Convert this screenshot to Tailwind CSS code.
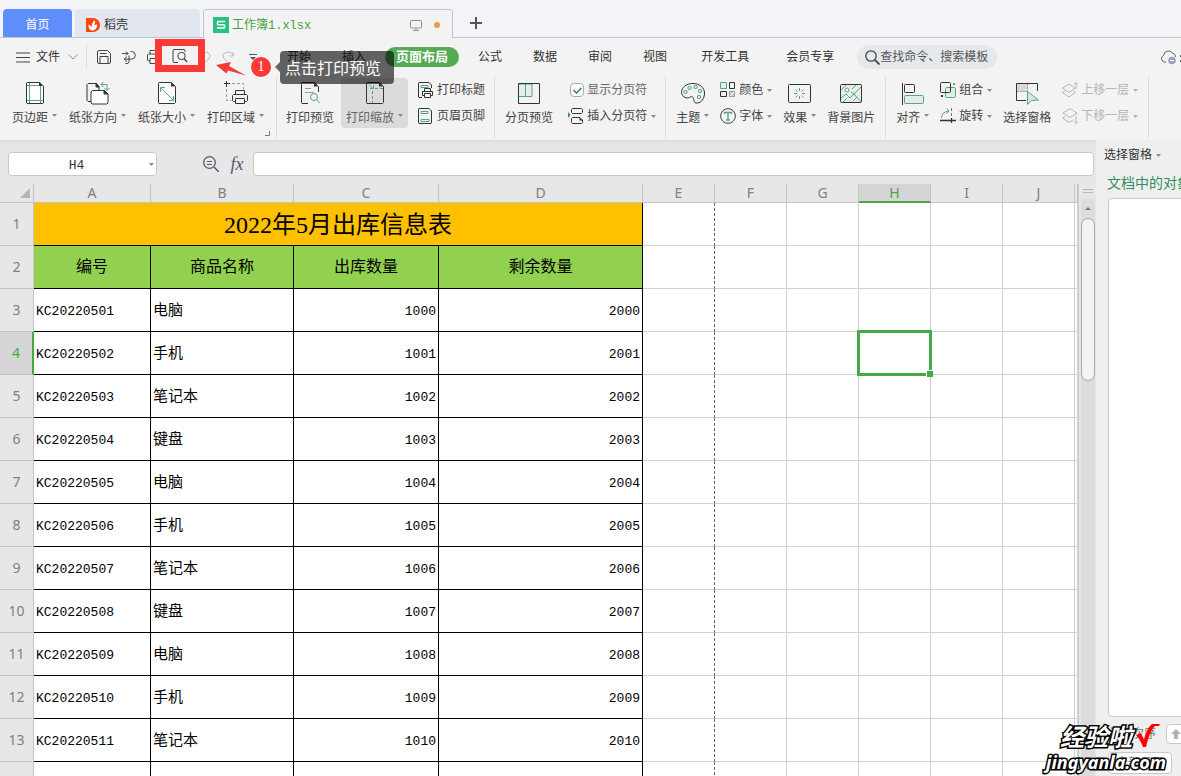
<!DOCTYPE html>
<html lang="zh-CN">
<head>
<meta charset="utf-8">
<meta name="viewport" content="width=device-width, initial-scale=1">
<title>工作簿1.xlsx</title>
<script src="https://cdn.jsdelivr.net/npm/@tailwindcss/browser@4"></script>
</head>
<body class="relative flex h-screen flex-col overflow-hidden bg-[#e7e7e7] font-['Liberation_Sans','Noto_Sans_CJK_SC',sans-serif] text-xs text-[#333] whitespace-nowrap">

<svg class="hidden">
  <symbol id="caret" viewBox="0 0 5 3"><path d="M0 0h5L2.5 3z" fill="#8a8a8a"/></symbol>
</svg>

<!-- Document tabs -->
<header class="relative flex h-[38px] shrink-0 items-end border-b border-[#c0c5d3] bg-[#f2f4f8]">
  <button class="ml-[3px] h-7 w-[69px] rounded-t-sm bg-[#5f8dfb] pt-1 text-white">首页</button>
  <button class="ml-[3px] flex h-7 w-[125px] items-center gap-1 rounded-t-sm bg-[#e2e6ef] pt-1 pl-[11px]">
    <svg class="size-[14px]" viewBox="0 0 14 14"><path d="M0 0h7a7 7 0 0 1 0 14H0z" fill="#fb4612"/><path d="M6.500 12.500C2.500 12 2.500 8.500 2.500 6.500c1.500.5 2.500 1.500 3.200 3C5.500 6.500 6.500 4 9 2c.4 2 0 4-1.400 6 .9-.9 2-1.400 3.600-1.400 0 3.200-1.400 5.500-4.700 5.900z" fill="#fff"/></svg>
    <span>稻壳</span>
  </button>
  <div class="-mb-px ml-[3px] flex h-[29px] w-[250px] items-center rounded-t border border-b-0 border-[#c0c5d3] bg-[#f3f3f3] pt-0.5 pr-3 pl-[9px]">
    <svg class="size-4 shrink-0" viewBox="0 0 16 16"><path d="M0 0h16v16H0z" fill="#27c280"/><path d="M12 4.500H5l-.5.500v2.200l.5.500h6l.5.500v2.300l-.5.500H4" fill="none" stroke="#fff" stroke-width="1.500"/></svg>
    <span class="ml-[3px] text-[#3fa43f]">工作簿<span class="font-['Liberation_Mono',monospace]">1.xlsx</span></span>
    <svg class="ml-auto h-[11px] w-3" viewBox="0 0 12 11" fill="none" stroke="#8d8d8d"><rect x=".5" y=".5" width="11" height="7.500" rx="1"/><path d="M6 8v2.500M3 10.500h6"/></svg>
    <span class="ml-3 size-1.5 rounded-full bg-[#e79c53]"></span>
  </div>
  <button class="ml-[17px] flex h-7 items-center" aria-label="新建标签"><svg class="size-3" viewBox="0 0 12 12"><path d="M6 0v12M0 6h12" stroke="#555" stroke-width="2"/></svg></button>
</header>

<!-- Menu -->
<div class="flex h-[38px] shrink-0 items-center bg-[#f3f3f3]">
  <button class="ml-4 flex items-center">
    <svg class="h-[11px] w-[14px]" viewBox="0 0 14 11"><path d="M0 1h14M0 5.500h14M0 10h14" stroke="#444"/></svg>
    <span class="ml-1.5">文件</span>
    <svg class="ml-2 h-[6px] w-[10px]" viewBox="0 0 10 6"><path d="M.5.5 5 5 9.500.5" fill="none" stroke="#888"/></svg>
  </button>
  <span class="ml-2 h-6 w-px bg-[#ddd]"></span>
  <div class="ml-2.5 flex w-[180px] items-center gap-[11px] text-[#444]">
    <button aria-label="保存" class="size-[14px]"><svg viewBox="0 0 14 14" fill="none" stroke="currentColor"><path d="M2 .5h8.500l3 3V12q0 1.500-1.500 1.500H2Q.5 13.500.5 12V2Q.5.5 2 .5zM3 3.500h6.500M3 13V6.500h8V13"/></svg></button>
    <button aria-label="输出" class="size-[14px]"><svg viewBox="0 0 14 14" fill="none" stroke="currentColor"><path d="M0 3.500h6M4 1.500l2 2-2 2M8.500 1.500h1a3.800 3.800 0 0 1 0 7.600H2M5 6.500 2.300 9.100 5 11.700M7 5.500v6a2 2 0 0 1-2 2H3.500"/></svg></button>
    <button aria-label="打印" class="size-[14px]"><svg viewBox="0 0 14 14" fill="none" stroke="currentColor"><path d="M3 4V.5h8V4M3 11H1.500L.5 10V5l1-1h11l1 1v5l-1 1H11M3 8.500h8v5H3z"/></svg></button>
    <button aria-label="打印预览" class="size-4"><svg viewBox="0 0 16 16" fill="none" stroke="currentColor"><path d="M6 13.500H2Q1 13.500 1 12.500v-11Q1 .5 2 .5h10q1 0 1 1V3"/><circle cx="9.500" cy="7" r="3.700"/><path d="m12 9.500 3 3.500" stroke-width="1.500"/></svg></button>
    <button aria-label="撤销" class="size-3 text-[#bbb]"><svg viewBox="0 0 12 12" fill="none" stroke="currentColor"><path d="M1 1v4h4M1 5a5 4 0 0 1 10 0q0 3-5 6"/></svg></button>
    <button aria-label="恢复" class="size-3 text-[#bbb]"><svg viewBox="0 0 12 12" fill="none" stroke="currentColor"><path d="M11 1v4H7M11 5A5 4 0 0 0 1 5q0 3 5 6"/></svg></button>
    <button aria-label="更多" class="ml-1 h-[6px] w-2"><svg viewBox="0 0 8 6"><path d="M0 0h8v1H0zM1 3h6L4 6z" fill="#555"/></svg></button>
  </div>
  <nav class="ml-2.5 flex shrink-0 items-center gap-[31px]">
    <a href="#">开始</a><a href="#">插入</a>
    <a href="#" class="-mx-3 flex h-5 items-center rounded-full bg-[#55ab54] px-[11px] text-[13px] font-bold text-white">页面布局</a>
    <a href="#">公式</a><a href="#">数据</a><a href="#">审阅</a><a href="#">视图</a>
    <a href="#" class="ml-[3px]">开发工具</a><a href="#" class="ml-1.5">会员专享</a>
  </nav>
  <label class="ml-[23px] flex h-6 w-[140px] shrink-0 items-center rounded-full bg-[#e6e9ec] pl-2">
    <svg class="size-[15px] shrink-0" viewBox="0 0 15 15" fill="none" stroke="#444" stroke-width="1.300"><circle cx="6" cy="6" r="5.200"/><path d="m10 10 4.500 4.500" stroke-width="1.800"/></svg>
    <input class="w-[116px] text-[#555] outline-none placeholder:text-[#555] placeholder:opacity-100" placeholder="查找命令、搜索模板" aria-label="查找命令">
  </label>
  <svg class="ml-auto h-[15px] w-[21px] shrink-0" viewBox="0 0 21 15"><path d="M6 12H4a3.500 3.500 0 0 1-.5-6.500A5 5 0 0 1 12.500 3q3 .5 3 4" fill="none" stroke="#666"/><circle cx="12" cy="10.500" r="3.800" fill="#98a4b8"/><path d="M10 10.500h4" stroke="#fff"/><path d="M20 5h1v2h-1zM20 10h1v2h-1z" fill="#666"/></svg>
</div>

<!-- Ribbon -->
<section class="flex h-16 shrink-0 bg-[#f3f3f3] text-[#444] [&_button]:shrink-0 [&_button>span>svg]:mb-1.5 [&>div]:relative [&>div]:flex [&>div]:h-[62px] [&>div]:shrink-0 [&>div]:items-start [&>div]:border-r [&>div]:border-[#ddd] [&>div]:pt-0.5">
  <div class="gap-3 px-3">
    <button class="flex h-[50px] flex-col items-center justify-between pt-[3px]">
      <svg class="h-6 w-5" viewBox="0 0 20 24" fill="none"><path d="M2.500 1.500h12L18.500 5v17l-1 .5H2L1.500 22V2z" fill="#fff" stroke="#333"/><path d="M4.500 2v20M15.500 4v18M2 4.500h16M2 19.500h16" stroke="#5aa57c"/><path d="M14 1v4h4z" fill="#333"/></svg>
      <span class="flex items-center gap-1 leading-5">页边距<svg class="h-[3px] w-[5px]"><use href="#caret"/></svg></span>
    </button>
    <button class="flex h-[50px] flex-col items-center justify-between pt-[3px]">
      <svg class="h-6 w-6" viewBox="0 0 24 24" fill="none" stroke="#333"><path d="M5 20.500H2l-1-1v-16l1-1h8l3 3v4"/><path d="M6.500 9.500h12l3.500 3.500v9l-1 1H6l-1-1V11z" fill="#fff"/><path d="M10 2v4h3zM18 9.500V13h4z" fill="#333"/><path d="M15 3.500h6v5.500M17.500 1 15 3.500 17.500 6M18.500 7l2.500 2.500L23.500 7" stroke="#5aa57c"/></svg>
      <span class="flex items-center gap-1 leading-5">纸张方向<svg class="h-[3px] w-[5px]"><use href="#caret"/></svg></span>
    </button>
    <button class="flex h-[50px] flex-col items-center justify-between pt-[3px]">
      <svg class="h-6 w-5" viewBox="0 0 20 24" fill="none"><path d="M2 1.500h12.500l4 4V21.500l-1 1H2l-.5-1v-19z" fill="#fafafa" stroke="#333"/><path d="M14 1.500v4h4z" fill="#333"/><path d="m4 7 12 12M3.500 11V6.500H8M16.500 15v4.500H12" stroke="#5aa57c"/></svg>
      <span class="flex items-center gap-1 leading-5">纸张大小<svg class="h-[3px] w-[5px]"><use href="#caret"/></svg></span>
    </button>
    <button class="flex h-[50px] flex-col items-center justify-between pt-[3px]">
      <svg class="h-6 w-6" viewBox="0 0 24 24" fill="none" stroke="#333"><path d="M2.500 0v6M0 2.500h6"/><path d="M8 2.500h11.500v6M2.500 8v11.500h5" stroke="#999" stroke-dasharray="3 2"/><path d="M11.500 13.500v-4h9v4M11.500 20.500h-2l-1-1v-5l1-1h13l1 1v5l-1 1h-2M11.500 17.500h9v5h-9z"/></svg>
      <span class="flex items-center gap-1 leading-5">打印区域<svg class="h-[3px] w-[5px]"><use href="#caret"/></svg></span>
    </button>
    <svg class="absolute right-1.5 bottom-0.5 size-[5px]" viewBox="0 0 5 5"><path d="M4.500 0v4.500H0" fill="none" stroke="#777"/></svg>
  </div>

  <div class="gap-[7px] px-[9px]">
    <button class="flex h-[50px] flex-col items-center justify-between pt-[3px]">
      <svg class="h-6 w-5" viewBox="0 0 20 24" fill="none"><path d="M8 22.500H2l-.5-1v-19l.5-1h12.500l4 4V11" stroke="#333"/><path d="M14 1.500v4h4z" fill="#333"/><path d="M5 7.500h6M5 11.500h9" stroke="#999"/><circle cx="14" cy="16" r="3.500" stroke="#5aa57c"/><path d="m16.500 18.500 3.500 4" stroke="#5aa57c"/></svg>
      <span class="leading-5">打印预览</span>
    </button>
    <button class="flex h-[50px] flex-col items-center justify-between rounded bg-[#dbdbdb] px-[5px] pt-[3px] text-[#666]">
      <svg class="h-6 w-5" viewBox="0 0 20 24" fill="none"><path d="M2 1.500h12.500l4 4V21.500l-1 1H2l-.5-1v-19z" stroke="#333"/><path d="M14 1.500v4h4z" fill="#333"/><path d="m4 3.500 4 4M8.500 4v3.500H5" stroke="#5aa57c"/><path d="M10 7.500h8M7.500 10v12" stroke="#5aa57c" stroke-dasharray="3 2"/></svg>
      <span class="flex items-center gap-1 leading-5">打印缩放<svg class="h-[3px] w-[5px]"><use href="#caret"/></svg></span>
    </button>
    <span class="ml-0.5 flex flex-col gap-1.5 pt-0.5">
      <button class="flex h-5 items-center gap-1"><svg class="size-4" viewBox="0 0 16 16" fill="none" stroke="#333"><path d="M5 15.500H2L1.500 15V1L2 .5h10L14.500 3v3"/><path d="M4 3.500h7v2H4z" stroke="#5aa57c"/><path d="M7.500 9V6.500h6V9M7.500 13.500h-2v-4h10v4h-2M7.500 11.500h6v4h-6z"/></svg>打印标题</button>
      <button class="flex h-5 items-center gap-1"><svg class="size-4" viewBox="0 0 16 16" fill="none" stroke="#333"><path d="M2 .5h10L14.500 3v12l-.5.5H2l-.5-.5V1z"/><path d="M4 3.500h7v2H4zM4 11.500h8v2H4z" stroke="#5aa57c"/></svg>页眉页脚</button>
    </span>
  </div>

  <div class="gap-[15px] pr-[9px] pl-2.5">
    <button class="flex h-[50px] flex-col items-center justify-between pt-[3px]">
      <svg class="size-6" viewBox="0 0 24 24" fill="none"><path d="M2 3h13v12.500H2M8.500 3v12.500" fill="#e3efe8" stroke="#5aa57c"/><path d="M1.500 2.500h21v20h-21z" stroke="#333"/></svg>
      <span class="leading-5">分页预览</span>
    </button>
    <span class="flex flex-col gap-1.5 pt-0.5">
      <label class="relative flex h-5 items-center gap-[3px] pl-0.5 text-[#666]"><input type="checkbox" checked class="size-3.5 appearance-none rounded-sm border border-[#aaa] bg-white"><svg class="pointer-events-none absolute left-[5px] h-[7px] w-[9px]" viewBox="0 0 9 7"><path d="m.5 3 3 3L8.500.8" fill="none" stroke="#3d8c62" stroke-width="1.600"/></svg>显示分页符</label>
      <button class="flex h-5 items-center gap-[3px]"><svg class="size-4" viewBox="0 0 16 16" fill="none" stroke="#333"><path d="M3.500 2v2.500l1 1h9l1-1V1.500l-1-1h-9l-1 1v1M3.500 13.500v-3l1-1H12l2.500 2.500v2.500l-1 1h-9l-1-1z"/><path d="M11.500 9.500v3h3z" fill="#333" stroke="none"/><path d="M0 4v6l2.500-3z" fill="#3d8c62" stroke="none"/></svg>插入分页符<svg class="ml-px h-[3px] w-[5px]"><use href="#caret"/></svg></button>
    </span>
  </div>

  <div class="gap-[11px] px-2.5">
    <button class="flex h-[50px] flex-col items-center justify-between pt-[3px]">
      <svg class="h-6 w-[26px]" viewBox="0 0 26 24" fill="none"><path d="M13 2.500c6.500 0 11.500 4 11.500 9.500s-3 10-7.500 10c-4 0-2.500-3.500-4-5.500s-3.500.5-6 .5S1.500 14.500 1.500 11.500c0-5.500 5-9 11.500-9z" stroke="#333"/><g fill="#d5ebde" stroke="#5aa57c"><circle cx="5.500" cy="11" r="1.700"/><circle cx="9.500" cy="7" r="1.700"/><circle cx="15.500" cy="6" r="1.700"/><circle cx="20" cy="10" r="1.700"/><circle cx="19" cy="16" r="1.700"/></g></svg>
      <span class="flex items-center gap-1 leading-5">主题<svg class="h-[3px] w-[5px]"><use href="#caret"/></svg></span>
    </button>
    <span class="flex flex-col gap-1.5 pt-0.5">
      <button class="flex h-5 items-center gap-[3px]"><svg class="size-4" viewBox="0 0 16 16" fill="none"><path d="M.5.5h6v6h-6z" fill="#e3efe8" stroke="#5aa57c"/><path d="M9.500.5h5v6h-5zM.5 9.500h6v5h-6z" stroke="#333"/><path d="M9.500 9.500h5v5h-5zM9.500 13l4-4M11 15l4-4" stroke="#999"/></svg>颜色<svg class="ml-px h-[3px] w-[5px]"><use href="#caret"/></svg></button>
      <button class="flex h-5 items-center gap-[3px]"><svg class="size-4" viewBox="0 0 16 16" fill="none"><circle cx="8" cy="8" r="7.400" stroke="#444"/><path d="M4.500 6V4.500h7V6M8 4.500v7M6 12h4" stroke="#5aa57c" stroke-width="1.300"/></svg>字体<svg class="ml-px h-[3px] w-[5px]"><use href="#caret"/></svg></button>
    </span>
    <button class="flex h-[50px] flex-col items-center justify-between pt-[3px]">
      <svg class="size-6" viewBox="0 0 24 24" fill="none"><rect x=".5" y="3.500" width="22" height="18" rx="1" stroke="#333"/><path d="M11.500 7v3M11.500 15v3M6 12.500h3M14 12.500h3M7.500 8.500l2 2M13.500 14.500l2 2M15.500 8.500l-2 2M7.500 16.500l2-2" stroke="#5aa57c"/></svg>
      <span class="flex items-center gap-1 leading-5">效果<svg class="h-[3px] w-[5px]"><use href="#caret"/></svg></span>
    </button>
    <button class="flex h-[50px] flex-col items-center justify-between pt-[3px]">
      <svg class="size-6" viewBox="0 0 24 24" fill="none"><rect x="1.500" y="3.500" width="21" height="18" rx="1" fill="#e6f0ea"/><path d="m2 17 5-4 4 4 4-4 7 8M2 9l5-5M12 11l3 2 7-7M4 21l4-4M14 20l4-4M13 8l4-4" stroke="#5aa57c"/><circle cx="8" cy="9" r="2" fill="#fff" stroke="#5aa57c"/><rect x="1.500" y="3.500" width="21" height="18" rx="1" stroke="#333"/></svg>
      <span class="leading-5">背景图片</span>
    </button>
  </div>

  <div class="gap-[11px] px-2.5">
    <button class="flex h-[50px] flex-col items-center justify-between pt-[3px]">
      <svg class="size-6" viewBox="0 0 24 24" fill="none"><path d="M1.500 2v22" stroke="#333"/><rect x="3.500" y="3.500" width="10" height="8" rx="1" stroke="#333"/><rect x="3.500" y="14.500" width="19" height="8" rx="1" fill="#e0ede6" stroke="#5aa57c"/></svg>
      <span class="flex items-center gap-1 leading-5">对齐<svg class="h-[3px] w-[5px]"><use href="#caret"/></svg></span>
    </button>
    <span class="flex flex-col gap-1.5 pt-0.5">
      <button class="flex h-5 items-center gap-[3px]"><svg class="size-4" viewBox="0 0 16 16" fill="none"><rect x="5.500" y="5.500" width="10" height="10" rx="1" fill="#e0ede6" stroke="#5aa57c"/><rect x=".5" y=".5" width="10" height="10" rx="1" stroke="#333"/><path d="M13 1h2v2h-2z" fill="#5aa57c"/><path d="M1 13h2v2H1z" fill="#333"/></svg>组合<svg class="ml-px h-[3px] w-[5px]"><use href="#caret"/></svg></button>
      <button class="flex h-5 items-center gap-[3px]"><svg class="size-4" viewBox="0 0 16 16" fill="none"><path d="M1.500 10q0-6 7.500-7M6.500.5 9 3 6.500 5.500" stroke="#5aa57c"/><path d="M11.500 0v11" stroke="#777" stroke-dasharray="3 2"/><path d="M0 12.500h16M11.500 10v5" stroke="#333" stroke-width="1.300"/></svg>旋转<svg class="ml-px h-[3px] w-[5px]"><use href="#caret"/></svg></button>
    </span>
    <button class="flex h-[50px] flex-col items-center justify-between pt-[3px]">
      <svg class="size-6" viewBox="0 0 24 24" fill="none"><path d="M2 3h10v8H2z" fill="#d9d9dc"/><path d="M11 19.500H1.500v-17h21V10" stroke="#333"/><path d="M2 10.500h10M12.500 3v7" stroke="#999" stroke-dasharray="2 1"/><path d="M12.500 10.500v13l4-4 7-.5z" fill="#d7e9df" stroke="#5aa57c"/></svg>
      <span class="leading-5">选择窗格</span>
    </button>
    <span class="flex flex-col gap-1.5 pt-0.5 text-[#b5b5b5]">
      <button disabled class="flex h-5 items-center gap-[3px]"><svg class="size-4" viewBox="0 0 16 16" fill="none" stroke="currentColor"><path d="M7 2 .5 6 7 10.500l6-4.500zM.5 10.500 7 15l6.500-4.500L11 9M3 9l-2.500 1.500M14 7V.5M12 2.500 14 .5l2 2"/></svg>上移一层<svg class="ml-px h-[3px] w-[5px] opacity-60"><use href="#caret"/></svg></button>
      <button disabled class="flex h-5 items-center gap-[3px]"><svg class="size-4" viewBox="0 0 16 16" fill="none" stroke="currentColor"><path d="M8 .5 1 5l7 4.500L15 5zM3 8.500.5 10 7 14.500l4-2.500M14 8v7.500M12 13.500l2 2 2-2"/></svg>下移一层<svg class="ml-px h-[3px] w-[5px] opacity-60"><use href="#caret"/></svg></button>
    </span>
  </div>
</section>

<!-- Workspace -->
<div class="flex min-h-0 flex-1">
  <main class="flex min-w-0 flex-1 flex-col bg-linear-to-b from-[#dcdcdc] to-[#e7e7e7] to-[4px]">
    <div class="flex h-11 shrink-0 items-center pr-[2px] pb-2 pl-2 pt-3">
      <label class="relative flex h-6 w-[149px] shrink-0 items-center rounded border border-[#c9c9c9] bg-white">
        <input class="w-full pt-1 pr-3 text-center font-['Liberation_Mono',monospace] text-[13px] outline-none" value="H4" aria-label="名称框">
        <svg class="absolute right-0.5 h-[3px] w-[5px]"><use href="#caret"/></svg>
      </label>
      <button class="ml-[46px] size-4 shrink-0" aria-label="查找"><svg viewBox="0 0 16 16" fill="none" stroke="#505a70"><circle cx="6.500" cy="6.500" r="5.800" stroke-width="1.300"/><path d="M4 5.500h5M4 8.500h5"/><path d="m11 11 5 5" stroke-width="1.500"/></svg></button>
      <button class="ml-2.5 w-4 shrink-0 font-['Liberation_Serif',serif] text-lg leading-5 text-[#505a70] italic">fx</button>
      <input class="ml-2 h-6 min-w-0 flex-1 rounded border border-[#c9c9c9] bg-white px-2 outline-none" aria-label="编辑栏">
    </div>
    <div class="flex min-h-0 flex-1">
      <div class="min-w-0 flex-1 overflow-hidden bg-white">
        <table class="w-full table-fixed border-separate border-spacing-0 text-black
          [&_th]:border-r [&_th]:border-b [&_th]:border-[#c4c4c4] [&_th]:bg-[#e7e7e7] [&_th]:p-0 [&_th]:font-['Noto_Sans',sans-serif] [&_th]:text-sm/4 [&_th]:font-normal [&_th]:text-[#808080]
          [&_td]:border-r [&_td]:border-b [&_td]:border-[#d0d0d0] [&_td]:px-0.5 [&_td]:py-0
          [&_tbody_tr]:h-[43px]
          [&_.d_td:nth-child(-n+5)]:border-black
          [&_.d_td:nth-child(2)]:pt-1 [&_.d_td:nth-child(2)]:font-['Liberation_Mono',monospace] [&_.d_td:nth-child(2)]:text-[13px]
          [&_.d_td:nth-child(3)]:text-[15px]
          [&_.d_td:nth-child(4)]:pt-1 [&_.d_td:nth-child(4)]:text-right [&_.d_td:nth-child(4)]:font-['Liberation_Mono',monospace] [&_.d_td:nth-child(4)]:text-[13px]
          [&_.d_td:nth-child(5)]:pt-1 [&_.d_td:nth-child(5)]:text-right [&_.d_td:nth-child(5)]:font-['Liberation_Mono',monospace] [&_.d_td:nth-child(5)]:text-[13px]
          [&_.d_td:nth-child(6)]:border-r-[#666] [&_.d_td:nth-child(6)]:[border-right-style:dashed]">
          <colgroup><col class="w-[34px]"><col class="w-[117px]"><col class="w-[143px]"><col class="w-[145px]"><col class="w-[204px]"><col class="w-[72px]"><col class="w-[72px]"><col class="w-[72px]"><col class="w-[72px]"><col class="w-[72px]"><col class="w-[72px]"><col></colgroup>
          <thead>
            <tr class="h-[19px]"><th><svg class="ml-5 size-[10px]" viewBox="0 0 10 10"><path d="M10 0v10H0z" fill="#b5b5b5"/></svg></th><th>A</th><th>B</th><th>C</th><th>D</th><th>E</th><th>F</th><th>G</th><th class="border-b-2! border-b-[#46a846]! bg-[#d5d5d5]! text-[#46a846]!">H</th><th>I</th><th>J</th><th></th></tr>
          </thead>
          <tbody>
            <tr><th>1</th><td colspan="4" class="border-black! bg-[#ffc000] pt-0.5! text-center font-['Liberation_Serif','Noto_Sans_CJK_SC',serif] text-2xl leading-8">2022年5月出库信息表</td><td class="border-r-[#666]! [border-right-style:dashed]!"></td><td></td><td></td><td></td><td></td><td></td><td></td></tr>
            <tr class="text-base [&_td]:text-center [&_td:nth-child(-n+5)]:border-black! [&_td:nth-child(-n+5)]:bg-[#92d050] [&_td:nth-child(6)]:border-r-[#666]! [&_td:nth-child(6)]:[border-right-style:dashed]"><th>2</th><td>编号</td><td>商品名称</td><td>出库数量</td><td>剩余数量</td><td></td><td></td><td></td><td></td><td></td><td></td><td></td></tr>
            <tr class="d"><th>3</th><td>KC20220501</td><td>电脑</td><td>1000</td><td>2000</td><td></td><td></td><td></td><td></td><td></td><td></td><td></td></tr>
            <tr class="d"><th class="border-r-2! border-r-[#46a846]! bg-[#d5d5d5]! text-[#46a846]!">4</th><td>KC20220502</td><td>手机</td><td>1001</td><td>2001</td><td></td><td></td><td></td><td class="relative"><span class="absolute -top-0.5 -right-0.5 -bottom-0.5 -left-0.5 border-3 border-[#46a846]"></span><span class="absolute -right-[3px] -bottom-[3px] size-[7px] border-t border-l border-white bg-[#46a846]"></span></td><td></td><td></td><td></td></tr>
            <tr class="d"><th>5</th><td>KC20220503</td><td>笔记本</td><td>1002</td><td>2002</td><td></td><td></td><td></td><td></td><td></td><td></td><td></td></tr>
            <tr class="d"><th>6</th><td>KC20220504</td><td>键盘</td><td>1003</td><td>2003</td><td></td><td></td><td></td><td></td><td></td><td></td><td></td></tr>
            <tr class="d"><th>7</th><td>KC20220505</td><td>电脑</td><td>1004</td><td>2004</td><td></td><td></td><td></td><td></td><td></td><td></td><td></td></tr>
            <tr class="d"><th>8</th><td>KC20220506</td><td>手机</td><td>1005</td><td>2005</td><td></td><td></td><td></td><td></td><td></td><td></td><td></td></tr>
            <tr class="d"><th>9</th><td>KC20220507</td><td>笔记本</td><td>1006</td><td>2006</td><td></td><td></td><td></td><td></td><td></td><td></td><td></td></tr>
            <tr class="d"><th>10</th><td>KC20220508</td><td>键盘</td><td>1007</td><td>2007</td><td></td><td></td><td></td><td></td><td></td><td></td><td></td></tr>
            <tr class="d"><th>11</th><td>KC20220509</td><td>电脑</td><td>1008</td><td>2008</td><td></td><td></td><td></td><td></td><td></td><td></td><td></td></tr>
            <tr class="d"><th>12</th><td>KC20220510</td><td>手机</td><td>1009</td><td>2009</td><td></td><td></td><td></td><td></td><td></td><td></td><td></td></tr>
            <tr class="d"><th>13</th><td>KC20220511</td><td>笔记本</td><td>1010</td><td>2010</td><td></td><td></td><td></td><td></td><td></td><td></td><td></td></tr>
            <tr class="d"><th></th><td></td><td></td><td></td><td></td><td></td><td></td><td></td><td></td><td></td><td></td><td></td></tr>
          </tbody>
        </table>
      </div>
      <!-- Vertical scroll bar -->
      <div class="flex w-[18px] shrink-0 flex-col border-l border-[#c9c9c9] pr-px pl-0.5">
        <div class="mx-0.5 mt-[5px] mb-1.5 h-[4px] border-y border-[#b5b5b5]"></div>
        <div class="flex flex-1 flex-col items-center bg-[#dcdcdc]">
          <svg class="mt-2 h-[3px] w-1.5" viewBox="0 0 6 3"><path d="M0 3h6L3 0z" fill="#777"/></svg>
          <div class="mt-2 h-[163px] w-[14px] rounded-full border border-[#a8a8a8] bg-[#f3f3f3]"></div>
          <svg class="mt-auto mb-1.5 h-[3px] w-1.5" viewBox="0 0 6 3"><path d="M0 0h6L3 3z" fill="#777"/></svg>
        </div>
      </div>
    </div>
  </main>

  <!-- Selection pane -->
  <aside class="flex w-[85px] shrink-0 flex-col overflow-hidden bg-[#efefef] pl-2">
    <button class="mt-1.5 flex h-[18px] shrink-0 items-center gap-1">选择窗格<svg class="h-[3px] w-[5px]"><use href="#caret"/></svg></button>
    <h2 class="mt-2.5 ml-[3px] h-[18px] shrink-0 text-sm leading-[18px] text-[#2f8f57]">文档中的对象</h2>
    <div class="mt-1.5 ml-1 h-[519px] w-40 shrink rounded-sm border border-[#c9c9c9] bg-white"></div>
    <div class="mt-[7px] ml-1 flex h-5 shrink-0 items-center">
      <span class="w-[58px] shrink-0 text-[#777]">叠放次序</span>
      <button class="flex h-5 w-6 shrink-0 items-center justify-center rounded-sm border border-[#c9c9c9] bg-white" aria-label="上移"><svg class="mr-1 size-[10px]" viewBox="0 0 10 10"><path d="M5 0 0 5h3v5h4V5h3z" fill="#b0b0b0"/></svg></button>
    </div>
    <button class="mt-2 mb-0.5 ml-1 h-[22px] w-16 shrink-0 rounded-sm border border-[#c9c9c9] bg-white text-[#777]">全部显示</button>
  </aside>
</div>

<!-- Annotations laid over the window -->
<div class="absolute top-[39px] left-[155px] h-[33px] w-[50px] border-7 border-[#fb3a38]"></div>
<svg class="absolute top-[62px] left-[216px] h-[15px] w-[31px]" viewBox="0 0 31 15"><path d="M0 3 15 0l-2 4 17 9.500L12 8.500l-1.500 3z" fill="#f33b37"/></svg>
<span class="absolute top-[57px] left-[251px] flex size-5 items-center justify-center rounded-full bg-[#fb3a38] font-['Liberation_Serif',serif] text-sm text-white">1</span>
<svg class="absolute top-[62px] left-[275px] h-[10px] w-[5px]" viewBox="0 0 5 10"><path d="M5 0v10L0 5z" fill="#666"/></svg>
<div role="tooltip" class="absolute top-[51px] left-[280px] flex h-[33px] w-[114px] items-center rounded-sm bg-black/60 pt-0.5 pl-[5px] text-base text-white">点击打印预览</div>

<!-- Site mark -->
<div class="absolute right-[15px] bottom-1 flex flex-col items-end font-bold text-white italic">
  <div class="flex items-center gap-1 pr-1.5">
    <span class="text-2xl leading-6 [-webkit-text-stroke:3px_black] [paint-order:stroke_fill]">经验啦</span>
    <svg class="mb-1 h-6 w-6" viewBox="0 0 24 24"><path d="m0 11 5-2 3 7C10 8 13 2 16 0h8l-1 2h-4C15 6 12 14 10 23H7C5 18 3 14 0 11z" fill="#f00"/></svg>
  </div>
  <span class="font-['Noto_Sans',sans-serif] text-lg leading-5 [-webkit-text-stroke:3px_black] [paint-order:stroke_fill]">jingyanla.com</span>
</div>
</body>
</html>
